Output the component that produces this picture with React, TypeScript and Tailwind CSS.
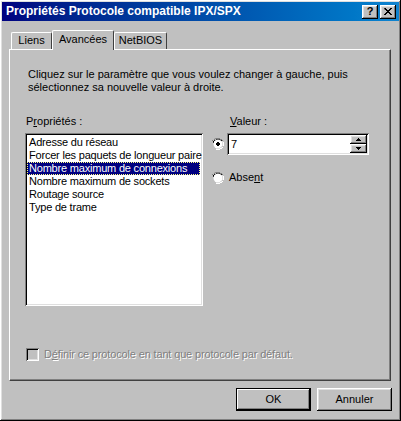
import React from 'react';

const raised =
  'shadow-[inset_-1px_-1px_#000,inset_1px_1px_#fff,inset_-2px_-2px_#808080,inset_2px_2px_#dfdfdf]';
const sunken =
  'shadow-[inset_1px_1px_#808080,inset_-1px_-1px_#fff,inset_2px_2px_#000,inset_-2px_-2px_#dfdfdf]';

function Radio({ checked }: { checked?: boolean }) {
  return (
    <svg width="12" height="12" viewBox="0 0 12 12" className="shrink-0">
      <path d="M4 0h4v1h2v1h1v2h-1v-1h-1v-1h-2v-1h-4v1h-2v1h-1v1h-1v4h1v2h-1v-6h1v-2h2v-1z" fill="#808080" />
      <path d="M4 1h4v1h2v1h-2v-1h-4v1h-2v2h-1v-2h1v-1h2z" fill="#000" />
      <circle cx="6" cy="6" r="4.5" fill="#fff" />
      <path d="M10 3h1v5h-1v2h-2v1h-4v-1h4v-1h2z" fill="#dfdfdf" />
      <path d="M11 4h1v4h-1v2h-1v1h-2v1h-4v-1h4v-1h2v-1h1z" fill="#fff" />
      {checked && <path d="M5 4h2v1h1v2h-1v1h-2v-1h-1v-2h1z" fill="#000" />}
    </svg>
  );
}

function Tab({ label, active, width }: { label: string; active?: boolean; width: string }) {
  return (
    <div
      className={`${width} ${
        active ? 'h-[20px] -mb-px z-10 pt-[2px]' : 'h-[17px] pt-[1px]'
      } relative bg-[#c0c0c0] border-t border-l border-white border-r border-r-[#404040] rounded-t-[2px] flex justify-center`}
    >
      {label}
    </div>
  );
}

function Button({ label, isDefault }: { label: string; isDefault?: boolean }) {
  return (
    <div
      className={`w-[75px] h-[23px] flex items-center justify-center bg-[#c0c0c0] ${
        isDefault
          ? 'shadow-[inset_0_0_0_1px_#000,inset_-2px_-2px_#000,inset_2px_2px_#fff,inset_-3px_-3px_#808080]'
          : raised
      }`}
    >
      {label}
    </div>
  );
}

export default function App() {
  const items = [
    'Adresse du réseau',
    'Forcer les paquets de longueur paire',
    'Nombre maximum de connexions',
    'Nombre maximum de sockets',
    'Routage source',
    'Type de trame',
  ];

  return (
    <div
      className={`w-[401px] h-[421px] bg-[#c0c0c0] p-[2px] flex flex-col text-[11px] leading-[13px] text-black ${raised}`}
      style={{ fontFamily: '"Liberation Sans", Arial, sans-serif' }}
    >
      {/* title bar */}
      <div className="h-[19px] bg-gradient-to-r from-[#000080] to-[#1084d0] flex items-center justify-between pl-[4px] pr-[3px]">
        <span className="text-white font-bold text-[12px]">Propriétés Protocole compatible IPX/SPX</span>
        <div className="flex gap-[2px]">
          <div className={`w-[16px] h-[14px] bg-[#c0c0c0] flex items-center justify-center font-bold text-[11px] ${raised}`}>?</div>
          <div className={`w-[16px] h-[14px] bg-[#c0c0c0] flex items-center justify-center ${raised}`}>
            <svg width="8" height="7" viewBox="0 0 8 7">
              <path d="M0 0h2v1h1v1h2v-1h1v-1h2v1h-1v1h-1v1h-1v1h1v1h1v1h1v1h-2v-1h-1v-1h-2v1h-1v1h-2v-1h1v-1h1v-1h1v-1h-1v-1h-1z" fill="#000" />
            </svg>
          </div>
        </div>
      </div>

      {/* tabs */}
      <div className="mt-[9px] ml-[9px] flex items-end h-[19px]">
        <Tab label="Liens" width="w-[41px]" />
        <Tab label="Avancées" width="w-[62px]" active />
        <Tab label="NetBIOS" width="w-[53px]" />
      </div>

      {/* panel */}
      <div className="ml-[7px] mr-[8px] h-[332px] border-t border-l border-white border-r border-b border-r-[#404040] border-b-[#404040] shadow-[inset_-1px_-1px_#808080] flex flex-col pl-[15px] pt-[18px] pb-[19px]">
        <p className="ml-[3px] w-[320px]">
          Cliquez sur le paramètre que vous voulez changer à gauche, puis sélectionnez sa nouvelle valeur à droite.
        </p>

        <div className="mt-[21px] flex">
          <div className="w-[178px] flex flex-col">
            <span className="ml-[1px]">
              P<span className="underline">r</span>opriétés :
            </span>
            <div className={`mt-[5px] h-[173px] bg-white p-[3px] pl-[2px] overflow-hidden ${sunken}`}>
              {items.map((it, i) => (
                <div
                  key={it}
                  className={`h-[13px] pl-[2px] whitespace-nowrap tracking-[-0.2px] ${
                    i === 2 ? 'bg-[#000080] text-white outline-1 outline-dotted outline-offset-[-1px] outline-[#ffff80]' : ''
                  }`}
                >
                  {it}
                </div>
              ))}
            </div>
          </div>

          <div className="ml-[9px] flex flex-col">
            <span className="ml-[18px]">
              <span className="underline">V</span>aleur :
            </span>
            <div className="mt-[5px] flex items-center gap-[3px]">
              <Radio checked />
              <div className={`w-[142px] h-[22px] bg-white flex items-center justify-between pl-[4px] pr-[2px] ${sunken}`}>
                <span>7</span>
                <div className="flex flex-col">
                  <div className={`w-[17px] h-[9px] bg-[#c0c0c0] flex items-center justify-center ${raised}`}>
                    <svg width="5" height="3" viewBox="0 0 5 3"><path d="M2 0h1v1h1v1h1v1h-5v-1h1v-1h1z" fill="#000" /></svg>
                  </div>
                  <div className={`w-[17px] h-[9px] bg-[#c0c0c0] flex items-center justify-center ${raised}`}>
                    <svg width="5" height="3" viewBox="0 0 5 3"><path d="M0 0h5v1h-1v1h-1v1h-1v-1h-1v-1h-1z" fill="#000" /></svg>
                  </div>
                </div>
              </div>
            </div>
            <div className="mt-[16px] flex items-center gap-[5px]">
              <Radio />
              <span>
                Abse<span className="underline">n</span>t
              </span>
            </div>
          </div>
        </div>

        <div className="flex-1" />

        <div className="flex items-center gap-[5px] ml-[1px]">
          <div className="w-[13px] h-[13px] bg-[#c0c0c0] shadow-[inset_1px_1px_#808080,inset_-1px_-1px_#fff,inset_2px_2px_#000,inset_-2px_-2px_#dfdfdf]" />
          <span className="text-[#808080] [text-shadow:1px_1px_#fff] tracking-[-0.15px]">
            D<span className="underline">é</span>finir ce protocole en tant que protocole par défaut.
          </span>
        </div>
      </div>

      {/* buttons */}
      <div className="mt-[7px] mr-[7px] flex justify-end gap-[6px]">
        <Button label="OK" isDefault />
        <Button label="Annuler" />
      </div>
    </div>
  );
}
